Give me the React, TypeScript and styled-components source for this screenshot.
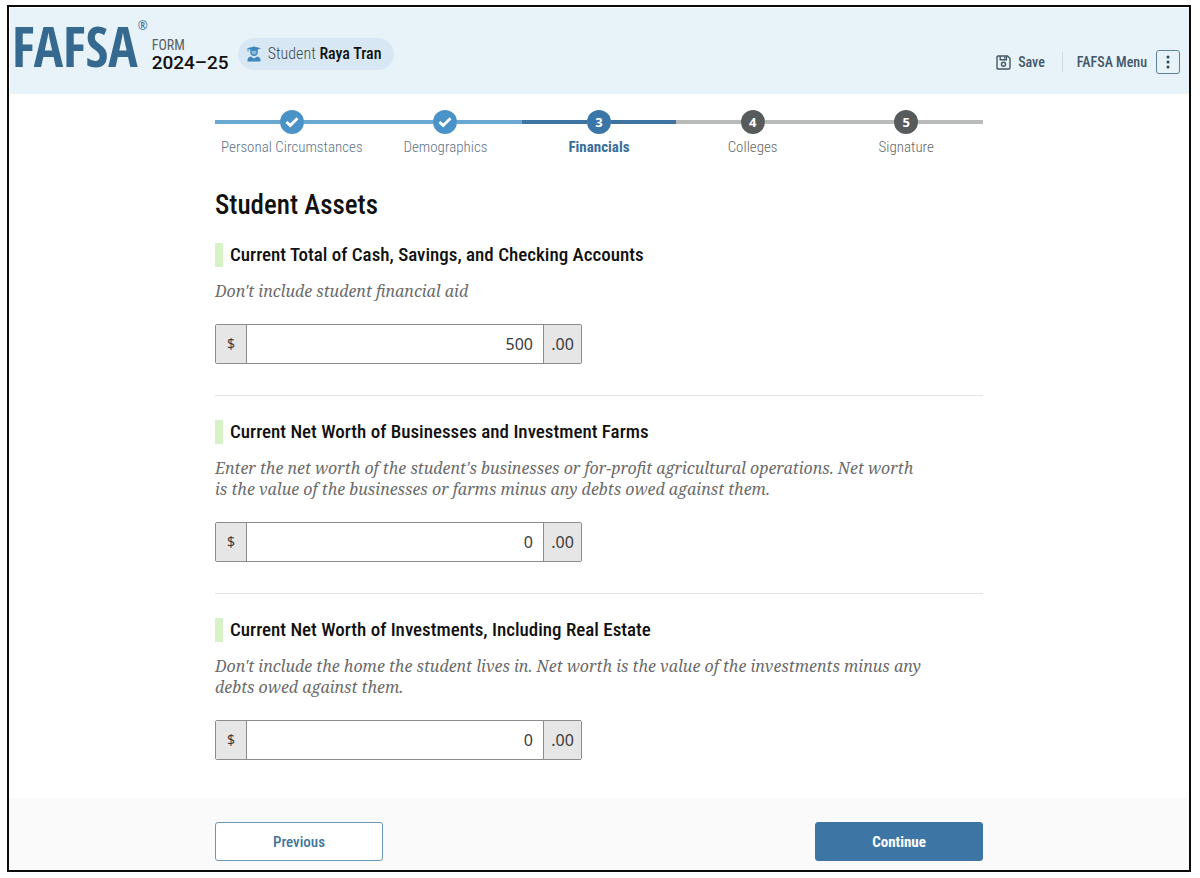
import React from 'react';
import styled, { createGlobalStyle } from 'styled-components';

const gothic = '"Roboto Condensed", Roboto, "Liberation Sans", sans-serif';
const serif = '"Noto Serif", "Liberation Serif", serif';
const sans = '"Noto Sans", "Open Sans", sans-serif';

type StepState = 'done' | 'current' | 'upcoming';

const lineColor: Record<StepState, string> = { done: '#6aa8d1', current: '#3d74a2', upcoming: '#b9bbbb' };
const dotColor: Record<StepState, string> = { done: '#4a93c9', current: '#3a76a8', upcoming: '#585b5c' };
const labelColor: Record<StepState, string> = { done: '#607486', current: '#3a6f9c', upcoming: '#666' };

const GlobalStyle = createGlobalStyle`
  *, *::before, *::after { box-sizing: border-box; }
  body { margin: 0; background: #fff; font-family: ${gothic}; color: #111; }
`;

const Frame = styled.div`
  margin: 5px 9px 6px 7px;
  border: 2px solid #0a0a0a;
  background: #fff;
`;

const Header = styled.header`
  display: flex;
  align-items: flex-start;
  height: 86px;
  margin: 1px 0 0 1px;
  padding: 0 9px 0 2px;
  background: #e8f3f9;
`;

const Logo = styled.div`
  display: flex;
  align-items: flex-start;
  padding-top: 10px;
  color: #36698f;
  font: 700 55px/56px "Open Sans Condensed", ${gothic};
`;

const Registered = styled.sup`
  font: 400 12px/16px ${sans};
`;

const FormYear = styled.div`
  display: flex;
  flex-direction: column;
  margin-top: 29px;
  margin-left: 4px;
  font: 400 14px/16px ${gothic};
  color: #5a5f63;
`;

const Year = styled.strong`
  font: 500 19px/20px Roboto, sans-serif;
  color: #111;
`;

const StudentPill = styled.div`
  display: flex;
  align-items: center;
  gap: 7px;
  height: 32px;
  margin-top: 30px;
  margin-left: 9px;
  padding: 0 13px 0 9px;
  border-radius: 16px;
  background: #d7e8f4;
  font: 300 16px/20px ${gothic};
  color: #3d4850;
  white-space: nowrap;

  strong { font-weight: 500; color: #111; }
`;

const Actions = styled.div`
  display: flex;
  align-items: center;
  margin-top: 42px;
  margin-left: auto;
`;

const HeaderButton = styled.button`
  display: flex;
  align-items: center;
  gap: 7px;
  padding: 0;
  border: 0;
  background: none;
  font: 500 14px/24px ${gothic};
  color: #435766;
  white-space: nowrap;
`;

const Divider = styled.span`
  width: 1px;
  height: 20px;
  margin: 0 14px 0 17px;
  background: #cfdbe3;
`;

const KebabBox = styled.span`
  display: grid;
  place-items: center;
  width: 24px;
  height: 24px;
  margin-left: 2px;
  border: 1px solid #5f8296;
  border-radius: 3px;
`;

const Content = styled.div`
  max-width: 768px;
  margin: 0 auto;
`;

const Steps = styled.ol`
  display: grid;
  grid-template-columns: repeat(5, 1fr);
  margin: 0;
  padding: 16px 0 0;
  list-style: none;
`;

const Step = styled.li<{ $state: StepState }>`
  display: flex;
  flex-direction: column;
  align-items: center;
  gap: 3px;
  font: ${p => (p.$state === 'current' ? 700 : 300)} 15px/20px ${gothic};
  color: ${p => labelColor[p.$state]};
  white-space: nowrap;
`;

const Track = styled.div<{ $state: StepState }>`
  display: flex;
  align-items: center;
  width: 100%;

  &::before, &::after {
    content: '';
    flex: 1;
    height: 4px;
    background: ${p => lineColor[p.$state]};
  }
`;

const Dot = styled.span<{ $state: StepState }>`
  display: grid;
  place-items: center;
  width: 24px;
  height: 24px;
  border-radius: 50%;
  background: ${p => dotColor[p.$state]};
  color: #fff;
  font: 700 13px/24px ${sans};
`;

const Title = styled.h1`
  margin: 32px 0 22px;
  font: 500 27px/32px ${gothic};
`;

const Question = styled.section`
  & + & {
    margin-top: 31px;
    padding-top: 24px;
    border-top: 1px solid #e4e4e4;
  }
`;

const QuestionLabel = styled.label`
  display: flex;
  align-items: center;
  gap: 7px;
  font: 500 19px/24px ${gothic};

  &::before {
    content: '';
    width: 8px;
    height: 24px;
    background: #d6f2c6;
  }
`;

const Hint = styled.p`
  max-width: 712px;
  margin: 14px 0 22px;
  font: italic 400 16px/21px ${serif};
  color: #6b6b6b;
`;

const Money = styled.div`
  display: flex;
  width: 367px;
  max-width: 100%;
  height: 40px;
  border: 1px solid #8c8c8c;
  border-radius: 2px;
`;

const Affix = styled.span<{ $width: number; $size: number }>`
  flex: none;
  width: ${p => p.$width}px;
  background: #e6e6e6;
  font: 400 ${p => p.$size}px/38px ${sans};
  color: #3c3c3c;
  text-align: center;
`;

const Amount = styled.input`
  flex: 1;
  min-width: 0;
  padding: 0 10px;
  border: solid #8c8c8c;
  border-width: 0 1px;
  background: #fff;
  font: 400 16px/38px ${sans};
  color: #3c3c3c;
  text-align: right;
`;

const Footer = styled.footer`
  margin-top: 38px;
  padding: 24px 0 9px;
  background: #fafafa;
`;

const FooterRow = styled(Content)`
  display: flex;
  justify-content: space-between;
`;

const NavButton = styled.button<{ $primary?: boolean }>`
  width: 168px;
  height: 39px;
  border: 1px solid ${p => (p.$primary ? '#3d76a5' : '#6b98b9')};
  border-radius: 3px;
  background: ${p => (p.$primary ? '#3d76a5' : '#fff')};
  color: ${p => (p.$primary ? '#fff' : '#40759a')};
  font: ${p => (p.$primary ? 700 : 500)} 15px/20px ${gothic};
`;

const GraduateIcon = () => (
  <svg width="14" height="16" viewBox="0 0 14 16" fill="#3f86bb" aria-hidden="true">
    <path d="M7 .5 14 2.200 10.800 3.400V6C10.800 8.400 9.200 10 7 10S3.200 8.400 3.200 6V3.400L1.500 2.900V5.800H.6V2.600L0 2.200Z" />
    <path d="M4.600 4.800h4.800V6c0 1.500-1 2.600-2.400 2.600S4.600 7.500 4.600 6Z" fill="#8fbbdb" />
    <path d="M.5 15.500V14c0-2 1.200-3.200 3.200-3.600L7 12.600l3.300-2.200c2 .4 3.200 1.600 3.200 3.600v1.500Z" />
  </svg>
);

const SaveIcon = () => (
  <svg width="15" height="15" viewBox="0 0 15 15" fill="none" stroke="#435766" strokeWidth="1.400" aria-hidden="true">
    <path d="M1 2.200Q1 1 2.200 1H11.500L14 3.500V12.800Q14 14 12.800 14H2.200Q1 14 1 12.800Z" />
    <path d="M4.200 1V4.700H10.400V1M8.600 2V3.600" />
    <circle cx="7.500" cy="9.300" r="2" />
  </svg>
);

const KebabIcon = () => (
  <svg width="4" height="14" viewBox="0 0 4 14" fill="#2f4655" aria-hidden="true">
    <circle cx="2" cy="2" r="1.500" />
    <circle cx="2" cy="7" r="1.500" />
    <circle cx="2" cy="12" r="1.500" />
  </svg>
);

const CheckIcon = () => (
  <svg width="14" height="12" viewBox="0 0 14 12" fill="none" stroke="#fff" strokeWidth="2.800" aria-label="Completed">
    <path d="M1.500 6 5.200 9.500 12.500 2.200" />
  </svg>
);

const steps: { label: string; state: StepState }[] = [
  { label: 'Personal Circumstances', state: 'done' },
  { label: 'Demographics', state: 'done' },
  { label: 'Financials', state: 'current' },
  { label: 'Colleges', state: 'upcoming' },
  { label: 'Signature', state: 'upcoming' },
];

const questions = [
  {
    id: 'cash',
    label: 'Current Total of Cash, Savings, and Checking Accounts',
    hint: "Don't include student financial aid",
    value: '500',
  },
  {
    id: 'business',
    label: 'Current Net Worth of Businesses and Investment Farms',
    hint: "Enter the net worth of the student's businesses or for-profit agricultural operations. Net worth is the value of the businesses or farms minus any debts owed against them.",
    value: '0',
  },
  {
    id: 'investments',
    label: 'Current Net Worth of Investments, Including Real Estate',
    hint: "Don't include the home the student lives in. Net worth is the value of the investments minus any debts owed against them.",
    value: '0',
  },
];

export default function App() {
  return (
    <Frame>
      <GlobalStyle />
      <Header>
        <Logo>
          FAFSA<Registered>®</Registered>
        </Logo>
        <FormYear>
          FORM
          <Year>2024–25</Year>
        </FormYear>
        <StudentPill>
          <GraduateIcon />
          <span>
            Student <strong>Raya Tran</strong>
          </span>
        </StudentPill>
        <Actions>
          <HeaderButton type="button">
            <SaveIcon />
            Save
          </HeaderButton>
          <Divider />
          <HeaderButton type="button">
            FAFSA Menu
            <KebabBox>
              <KebabIcon />
            </KebabBox>
          </HeaderButton>
        </Actions>
      </Header>
      <Content as="main">
        <Steps>
          {steps.map((step, i) => (
            <Step key={step.label} $state={step.state}>
              <Track $state={step.state}>
                <Dot $state={step.state}>{step.state === 'done' ? <CheckIcon /> : i + 1}</Dot>
              </Track>
              {step.label}
            </Step>
          ))}
        </Steps>
        <Title>Student Assets</Title>
        {questions.map(q => (
          <Question key={q.id}>
            <QuestionLabel htmlFor={q.id}>{q.label}</QuestionLabel>
            <Hint id={`${q.id}-hint`}>{q.hint}</Hint>
            <Money>
              <Affix $width={30} $size={14}>$</Affix>
              <Amount id={q.id} defaultValue={q.value} inputMode="numeric" aria-describedby={`${q.id}-hint`} />
              <Affix $width={37} $size={16}>.00</Affix>
            </Money>
          </Question>
        ))}
      </Content>
      <Footer>
        <FooterRow>
          <NavButton type="button">Previous</NavButton>
          <NavButton type="button" $primary>
            Continue
          </NavButton>
        </FooterRow>
      </Footer>
    </Frame>
  );
}
